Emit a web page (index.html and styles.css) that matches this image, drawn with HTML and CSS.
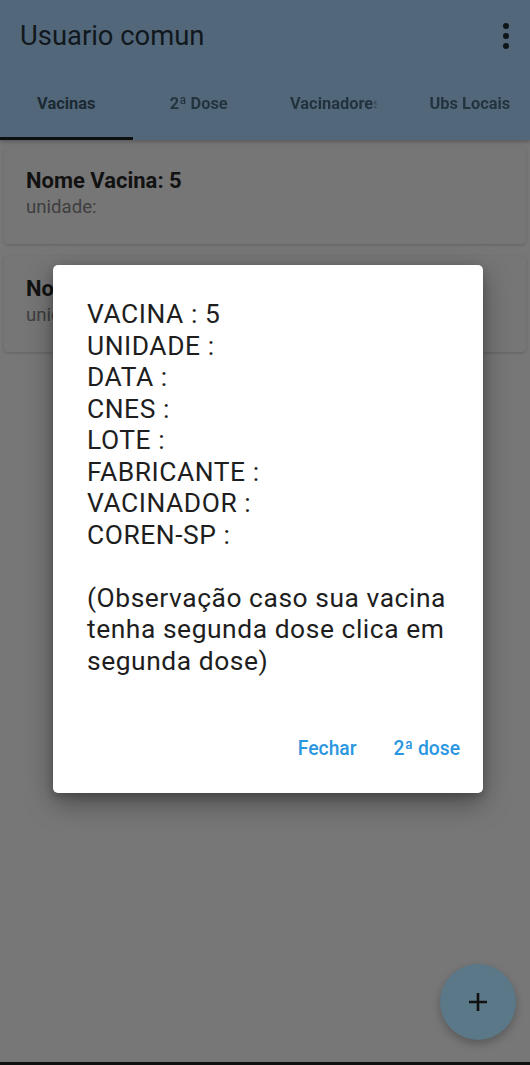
FILE: index.html
```html
<!DOCTYPE html>
<html lang="pt">
<head>
<meta charset="utf-8">
<link rel="stylesheet" href="styles.css">
</head>
<body>
<div class="screen">
  <header class="appbar">
    <div class="toolbar">
      <h1 class="title">Usuario comun</h1>
      <span class="menu"><i></i><i></i><i></i></span>
    </div>
    <nav class="tabs">
      <div class="tab active"><span>Vacinas</span></div>
      <div class="tab"><span>2ª Dose</span></div>
      <div class="tab clip"><span>Vacinadores</span></div>
      <div class="tab last"><span>Ubs Locais</span></div>
    </nav>
  </header>
  <main class="list">
    <div class="card">
      <div class="card-title">Nome Vacina: 5</div>
      <div class="card-sub">unidade:</div>
    </div>
    <div class="card">
      <div class="card-title">Nome Vacina: 5</div>
      <div class="card-sub">unidade:</div>
    </div>
  </main>
  <button class="fab"><svg width="22" height="22" viewBox="0 0 22 22"><path d="M11 2v18M2 11h18" stroke="#111" stroke-width="2.6"/></svg></button>
  <div class="navline"></div>

  <div class="dialog">
    <div class="dialog-body">
      <p>VACINA : 5<br>UNIDADE :<br>DATA :<br>CNES :<br>LOTE :<br>FABRICANTE :<br>VACINADOR :<br>COREN-SP :<br><br>(Observação caso sua vacina tenha segunda dose clica em segunda dose)</p>
    </div>
    <div class="dialog-actions">
      <span class="btn">Fechar</span>
      <span class="btn">2ª dose</span>
    </div>
  </div>
</div>
</body>
</html>
```
FILE: styles.css
```css
* { box-sizing: border-box; }
html, body { margin: 0; padding: 0; }
body {
  font-family: Roboto, "Noto Sans", sans-serif;
  background: #787878;
  width: 530px;
  height: 1065px;
  overflow: hidden;
}
.screen {
  position: relative;
  width: 530px;
  height: 1065px;
  background: #777777;
  display: flex;
  flex-direction: column;
}
.appbar {
  background: #53677a;
  height: 140px;
  box-shadow: 0 2px 4px rgba(0,0,0,0.25);
  display: flex;
  flex-direction: column;
}
.toolbar {
  height: 72px;
  display: flex;
  align-items: center;
  justify-content: space-between;
  padding: 0 20px;
}
.title {
  margin: 0;
  font-size: 27.4px;
  font-weight: 400;
  color: #11181d;
}
.menu {
  display: flex;
  flex-direction: column;
  gap: 4px;
  margin-right: 1px;
}
.menu i {
  display: block;
  width: 6px;
  height: 6px;
  border-radius: 50%;
  background: #101518;
}
.tabs {
  display: grid;
  grid-template-columns: repeat(4, 1fr);
  height: 68px;
}
.tab {
  min-width: 0;
  display: flex;
  align-items: center;
  justify-content: center;
  padding: 0 0 2px;
  font-size: 16.4px;
  font-weight: 700;
  color: #1b2a33;
  white-space: nowrap;
  overflow: hidden;
  border-bottom: 3px solid transparent;
}
.tab span { opacity: 0.85; }
.tab.active span { opacity: 1; }
.tab.active { border-bottom-color: #0d0f10; }
.tab.clip {
  justify-content: flex-start;
  padding-left: 25px;
  -webkit-mask-image: linear-gradient(to right, #000 80%, transparent 85%);
  mask-image: linear-gradient(to right, #000 80%, transparent 85%);
}
.tab.last { padding-left: 32px; justify-content: flex-start; }
.list {
  padding: 8px 4px;
  display: flex;
  flex-direction: column;
  gap: 12px;
}
.card {
  background: #767676;
  border-radius: 4px;
  box-shadow: 0 1px 3px rgba(0,0,0,0.18);
  padding: 20px 22px 0;
  height: 96px;
}
.card-title {
  font-size: 22px;
  font-weight: 700;
  color: #121212;
  line-height: 26px;
}
.card-sub {
  margin-top: 2px;
  font-size: 18.6px;
  color: #3e3e3e;
  line-height: 22px;
}
.fab {
  position: absolute;
  left: 440px;
  top: 964px;
  width: 76px;
  height: 76px;
  border-radius: 50%;
  border: 0;
  background: #5b7888;
  box-shadow: 0 4px 8px rgba(0,0,0,0.25);
  display: flex;
  align-items: center;
  justify-content: center;
  padding: 0;
}
.navline {
  position: absolute;
  left: 0;
  bottom: 0;
  width: 530px;
  height: 3px;
  background: #111;
}
.dialog {
  position: absolute;
  left: 53px;
  top: 265px;
  width: 430px;
  height: 528px;
  background: #fff;
  border-radius: 5px;
  box-shadow: 0 10px 28px rgba(0,0,0,0.35), 0 4px 10px rgba(0,0,0,0.2);
  display: flex;
  flex-direction: column;
}
.dialog-body {
  padding: 34px 10px 0 34px;
  flex: 1;
}
.dialog-body p {
  margin: 0;
  font-size: 26.4px;
  line-height: 31.5px;
  letter-spacing: 0.55px;
  color: #1e1e1e;
}
.dialog-actions {
  display: flex;
  justify-content: flex-end;
  gap: 37px;
  padding: 0 23px 33px;
}
.btn {
  font-size: 19.3px;
  font-weight: 500;
  color: #2b96e0;
}
```
